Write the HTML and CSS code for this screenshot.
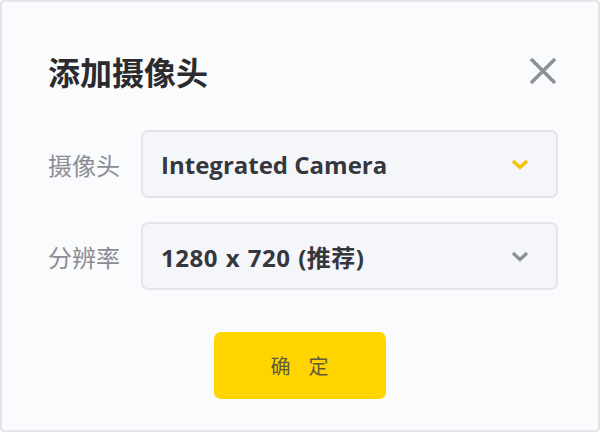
FILE: index.html
```html
<!DOCTYPE html>
<html lang="zh-CN">
<head>
<meta charset="utf-8">
<title>添加摄像头</title>
<link rel="stylesheet" href="styles.css">
</head>
<body>
<div class="dialog">
  <div class="header">
    <h1 class="title">添加摄像头</h1>
    <button class="close" aria-label="关闭">
      <svg width="28" height="28" viewBox="0 0 28 28"><path d="M2 2 L26 26 M26 2 L2 26" stroke="#8d9097" stroke-width="3.6" stroke-linecap="butt" fill="none"/></svg>
    </button>
  </div>
  <div class="row">
    <div class="label">摄像头</div>
    <div class="select">
      <span class="value">Integrated Camera</span>
      <svg class="chev" width="18" height="11" viewBox="0 0 18 11"><path d="M2 2 L9 8.5 L16 2" stroke="#f6c300" stroke-width="3.2" fill="none" stroke-linejoin="miter"/></svg>
    </div>
  </div>
  <div class="row">
    <div class="label">分辨率</div>
    <div class="select">
      <span class="value wide">1280 x 720 (推荐)</span>
      <svg class="chev" width="18" height="11" viewBox="0 0 18 11"><path d="M2 2 L9 8.5 L16 2" stroke="#8c8e9b" stroke-width="3.2" fill="none" stroke-linejoin="miter"/></svg>
    </div>
  </div>
  <div class="actions">
    <button class="ok">确定</button>
  </div>
</div>
</body>
</html>
```
FILE: styles.css
```css
html, body {
  margin: 0;
  padding: 0;
}
body {
  width: 600px;
  height: 432px;
  overflow: hidden;
  font-family: "Open Sans", "Noto Sans CJK SC", sans-serif;
}
.dialog {
  box-sizing: border-box;
  width: 600px;
  height: 432px;
  background: #fafbfc;
  border: 2px solid #e3e5ea;
  border-radius: 4px;
  padding: 48px 40px 0 46px;
  display: flex;
  flex-direction: column;
}
.header {
  display: flex;
  align-items: center;
  justify-content: space-between;
  height: 42px;
  margin-bottom: 38px;
}
.title {
  margin: 0;
  font-family: "Noto Sans CJK SC", sans-serif;
  font-weight: 700;
  font-size: 32px;
  line-height: 42px;
  color: #2b2b2e;
}
.close {
  border: 0;
  background: none;
  padding: 0;
  width: 28px;
  height: 28px;
  margin-right: 1px;
  display: flex;
}
.row {
  display: flex;
  align-items: center;
  margin-bottom: 24px;
}
.label {
  width: 93px;
  font-family: "Noto Sans CJK SC", sans-serif;
  font-size: 24px;
  color: #8b8d94;
}
.select {
  flex: 1;
  box-sizing: border-box;
  height: 68px;
  background: #f5f6f9;
  border: 2px solid #e3e5ea;
  border-radius: 7px;
  padding: 0 27px 0 18px;
  display: flex;
  align-items: center;
  justify-content: space-between;
}
.value {
  font-family: "Open Sans", "Noto Sans CJK SC", sans-serif;
  font-weight: 700;
  font-size: 24px;
  color: #36373d;
}
.value.wide {
  letter-spacing: 0.5px;
  word-spacing: 1px;
}
.actions {
  display: flex;
  justify-content: center;
  margin-top: 18px;
  padding-right: 7px;
}
.ok {
  width: 172px;
  height: 67px;
  border: 0;
  border-radius: 7px;
  background: #ffd400;
  font-family: "Noto Sans CJK SC", sans-serif;
  font-size: 20px;
  letter-spacing: 18px;
  padding-left: 24px;
  color: #5e5a3a;
}
```
